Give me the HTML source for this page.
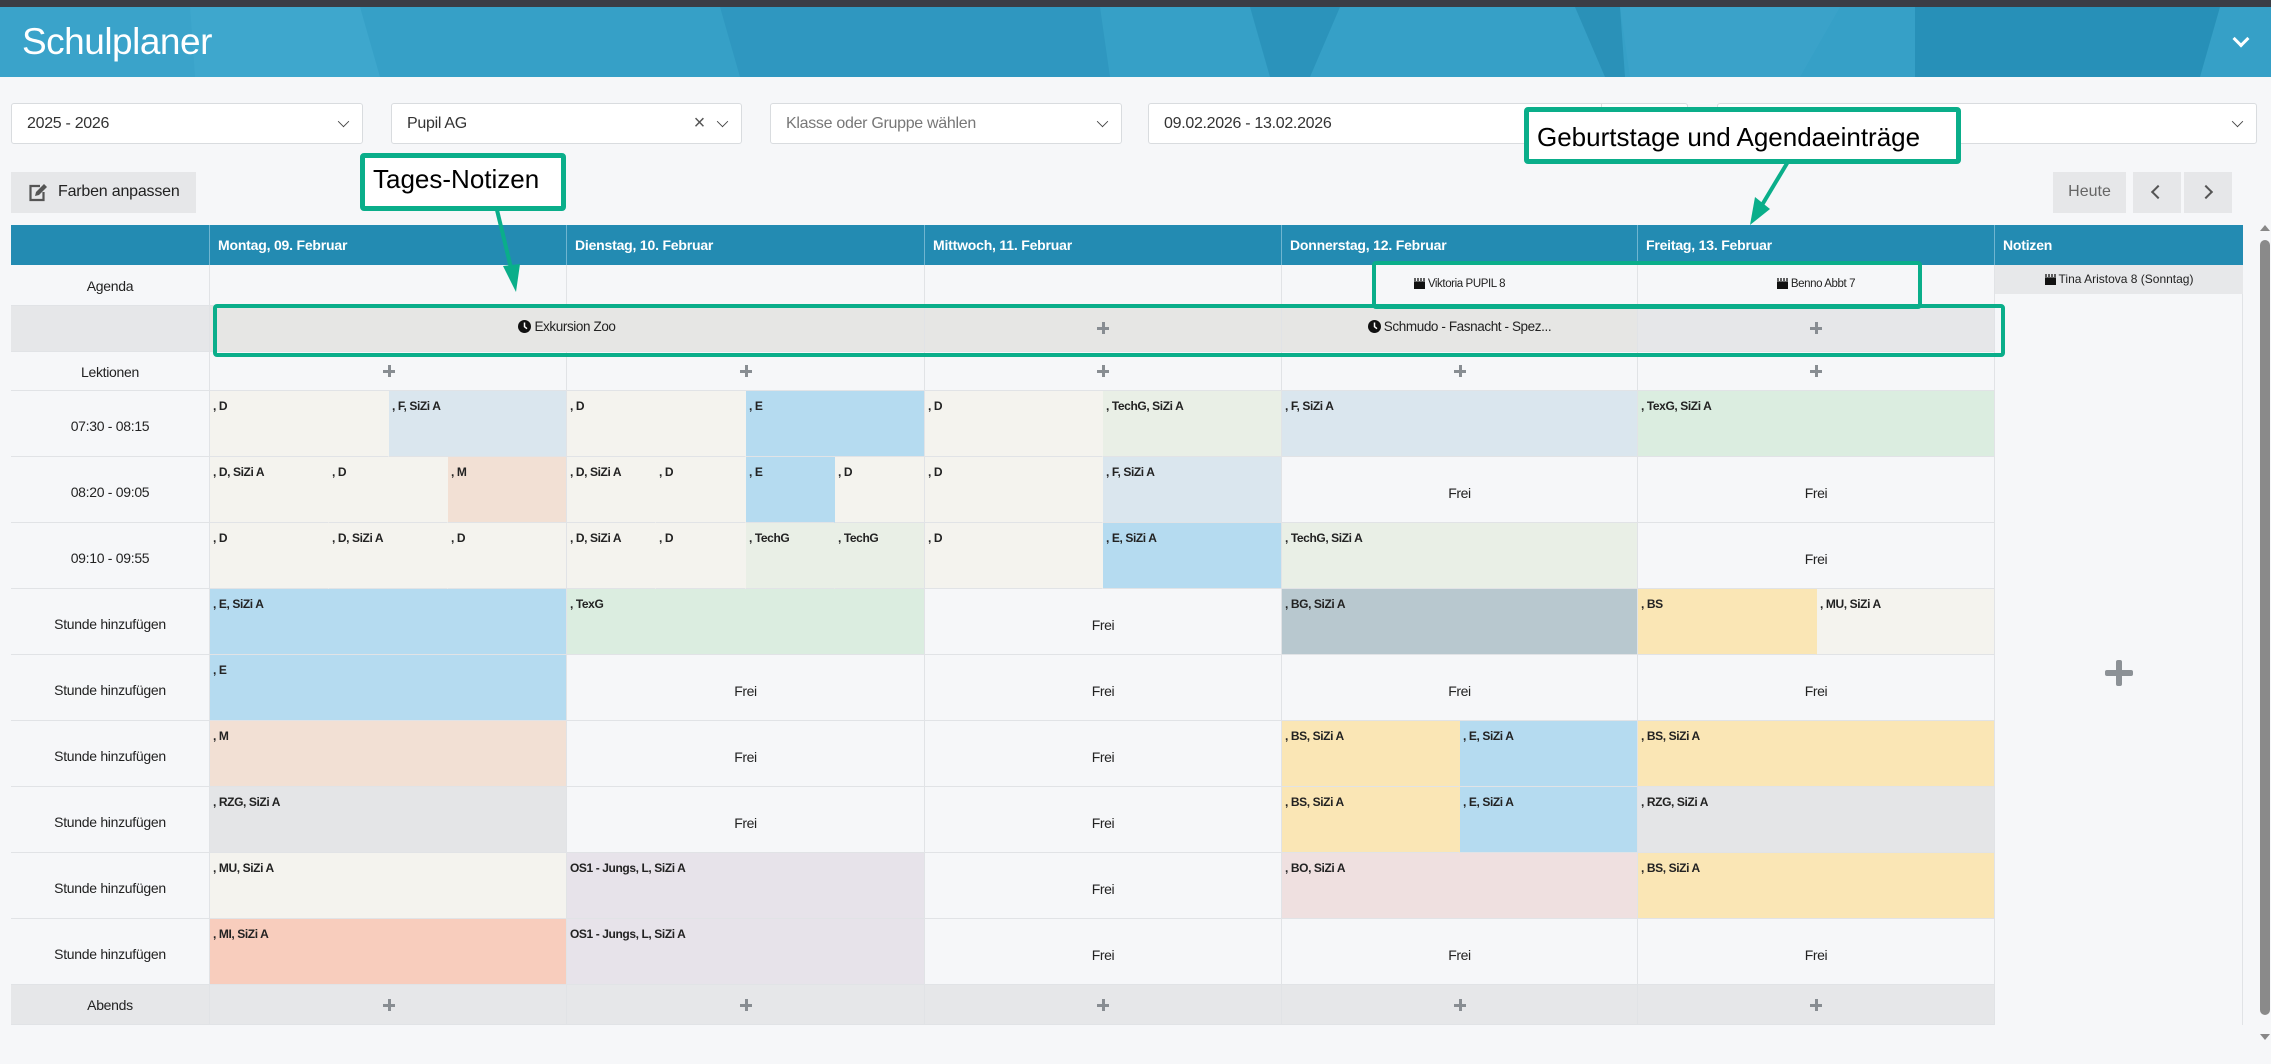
<!DOCTYPE html>
<html><head><meta charset="utf-8"><style>
*{margin:0;padding:0;box-sizing:border-box}
body{width:2271px;height:1064px;overflow:hidden;background:#f6f7f9;font-family:"Liberation Sans",sans-serif;position:relative;color:#222}
.a{position:absolute}
.hdr{left:0;top:7px;width:2271px;height:70px;background:#36a0c7;overflow:hidden}
.dd{position:absolute;top:103px;height:41px;background:#fff;border:1px solid #d9dcdf;border-radius:3px;font-size:16px;color:#333;padding:11px 15px;letter-spacing:-0.3px}
.chev{position:absolute;right:14px;top:13px;width:9px;height:9px;border-right:1.6px solid #444;border-bottom:1.6px solid #444;transform:rotate(45deg) scale(0.9,0.9)}
.c{position:absolute;border-right:1px solid #e1e3e6;border-bottom:1px solid #e1e3e6;background:#f6f7f9;font-size:12px;font-weight:bold;padding:8px 0 0 3px;letter-spacing:-0.4px;white-space:nowrap;overflow:hidden}
.in{border-right-color:transparent}
.fr{font-weight:normal;font-size:14px;text-align:center;padding:28px 0 0 0}
.lb{position:absolute;left:11px;width:199px;border-right:1px solid #e1e3e6;border-bottom:1px solid #e1e3e6;background:#f6f7f9;font-size:14px;text-align:center;letter-spacing:-0.3px}
.th{position:absolute;top:225px;height:40px;background:#238bb2;color:#fff;font-weight:bold;font-size:14px;padding:12px 8px;border-right:1px solid #6fb5d0;letter-spacing:-0.2px}
.pl{position:absolute;width:12px;height:12px}
.pl:before{content:"";position:absolute;left:5px;top:0;width:3px;height:12px;background:#888d92}
.pl:after{content:"";position:absolute;left:0;top:5px;width:12px;height:3px;background:#888d92}
.green{position:absolute;border:4px solid #0aae8a;border-radius:4px}
.call{position:absolute;background:#fff;border:5px solid #0aae8a;border-radius:4px;font-family:"Liberation Sans",sans-serif;color:#000;font-size:26px;padding:6px 8px;white-space:nowrap}
.bd{font-size:11.5px;font-weight:normal;color:#222}
.ic{display:inline-block;vertical-align:-2px;margin-right:3px}
</style></head><body>
<div class="a" style="left:0;top:0;width:2271px;height:7px;background:#3b3d45"></div>
<div class="a hdr">
<svg width="2271" height="70" style="position:absolute;left:0;top:0">
<polygon points="0,0 190,0 195,70 0,70" fill="#3aa3ca"/>
<polygon points="190,0 360,0 380,70 195,70" fill="#3ea7cd"/>
<polygon points="720,0 1100,0 1110,70 740,70" fill="#2f97c0"/>
<polygon points="1250,0 1340,0 1310,70 1270,70" fill="#2b93bb"/>
<polygon points="1575,0 1620,0 1625,70 1605,70" fill="#2a91b8"/>
<polygon points="1620,0 1840,0 1800,70 1630,70" fill="#3aa2c9"/>
<polygon points="1915,0 2220,0 2200,70 1915,70" fill="#2790b8"/>
</svg>
<div class="a" style="left:22px;top:14px;color:#fff;font-size:37px;letter-spacing:-0.5px">Schulplaner</div>
<div class="a" style="left:2235px;top:26px;width:12px;height:12px;border-right:3px solid #fff;border-bottom:3px solid #fff;transform:rotate(45deg)"></div>
</div>

<div class="dd" style="left:11px;width:352px">2025 - 2026<div class="chev"></div></div>
<div class="dd" style="left:391px;width:351px">Pupil AG<span style="position:absolute;right:36px;top:8px;font-size:20px;color:#555">×</span><div class="chev"></div></div>
<div class="dd" style="left:770px;width:352px;color:#777">Klasse oder Gruppe wählen<div class="chev"></div></div>
<div class="dd" style="left:1148px;width:540px">09.02.2026 - 13.02.2026<div class="a" style="left:452px;top:0;width:1px;height:39px;background:#ddd"></div></div>
<div class="dd" style="left:1717px;width:540px"><div class="chev"></div></div>

<div class="a" style="left:11px;top:172px;width:185px;height:41px;background:#e6e7e9;font-size:16px;padding:11px 0 0 47px;letter-spacing:-0.2px">Farben anpassen
<svg class="a" style="left:17px;top:11px" width="20" height="19" viewBox="0 0 20 19"><path d="M12 3H2.5v14h13V9" fill="none" stroke="#555" stroke-width="2.2"/><path d="M7 13l1-4 8-8 3 3-8 8z" fill="#555"/></svg></div>
<div class="a" style="left:2053px;top:172px;width:73px;height:41px;background:#e6e7e9;font-size:16px;color:#666;text-align:center;padding-top:11px">Heute</div>
<div class="a" style="left:2133px;top:172px;width:48px;height:41px;background:#e6e7e9"><div class="a" style="left:20px;top:15px;width:10px;height:10px;border-left:2.5px solid #555;border-bottom:2.5px solid #555;transform:rotate(45deg)"></div></div>
<div class="a" style="left:2184px;top:172px;width:48px;height:41px;background:#e6e7e9"><div class="a" style="left:17px;top:15px;width:10px;height:10px;border-right:2.5px solid #555;border-top:2.5px solid #555;transform:rotate(45deg)"></div></div>

<div class="th" style="left:11px;width:199px"></div>
<div class="th" style="left:210px;width:357px">Montag, 09. Februar</div>
<div class="th" style="left:567px;width:358px">Dienstag, 10. Februar</div>
<div class="th" style="left:925px;width:357px">Mittwoch, 11. Februar</div>
<div class="th" style="left:1282px;width:356px">Donnerstag, 12. Februar</div>
<div class="th" style="left:1638px;width:357px">Freitag, 13. Februar</div>
<div class="th" style="left:1995px;width:248px;border-right:none">Notizen</div>

<div class="a" style="left:1995px;top:265px;width:248px;height:760px;background:#f6f7f9;border-right:1px solid #e1e3e6"></div>
<div class="a" style="left:1995px;top:265px;width:248px;height:29px;background:#e7e8ea;font-size:12px;text-align:center;padding-top:7px"><svg class="ic" width="11" height="12" viewBox="0 0 11 12"><path d="M1 1v3M4 1v3M7 1v3M10 1v3M0 5h11v7H0z" stroke="#111" stroke-width="1.3" fill="#111"/></svg>Tina Aristova 8 (Sonntag)</div>
<div class="a" style="left:2105px;top:660px;width:28px;height:26px"><div class="a" style="left:11px;top:0;width:6px;height:26px;background:#8c9196;border-radius:2px"></div><div class="a" style="left:0;top:10px;width:28px;height:6px;background:#8c9196;border-radius:2px"></div></div>

<div class="lb" style="top:265px;height:41px;padding-top:13px">Agenda</div>
<div class="c" style="left:210px;top:265px;width:357px;height:41px"></div>
<div class="c" style="left:567px;top:265px;width:358px;height:41px"></div>
<div class="c" style="left:925px;top:265px;width:357px;height:41px"></div>
<div class="c bd" style="left:1282px;top:265px;width:356px;height:41px;text-align:center;padding:12px 0 0"><svg class="ic" width="11" height="12" viewBox="0 0 11 12"><path d="M1 1v3M4 1v3M7 1v3M10 1v3M0 5h11v7H0z" stroke="#111" stroke-width="1.3" fill="#111"/></svg>Viktoria PUPIL 8</div>
<div class="c bd" style="left:1638px;top:265px;width:357px;height:41px;text-align:center;padding:12px 0 0"><svg class="ic" width="11" height="12" viewBox="0 0 11 12"><path d="M1 1v3M4 1v3M7 1v3M10 1v3M0 5h11v7H0z" stroke="#111" stroke-width="1.3" fill="#111"/></svg>Benno Abbt 7</div>

<div class="lb" style="top:306px;height:46px;background:#e6e7e9"></div>
<div class="c" style="left:210px;top:306px;width:715px;height:46px;background:#e6e6e4;font-weight:normal;font-size:13.5px;text-align:center;padding:13px 0 0"><svg class="ic" width="13" height="13" viewBox="0 0 13 13"><circle cx="6.5" cy="6.5" r="6.5" fill="#111"/><path d="M6.5 2.5v4.2l2.5 2" stroke="#fff" stroke-width="1.5" fill="none"/></svg>Exkursion Zoo</div>
<div class="c" style="left:925px;top:306px;width:357px;height:46px;background:#e6e6e4"></div>
<div class="c" style="left:1282px;top:306px;width:356px;height:46px;background:#e6e6e4;font-weight:normal;font-size:13.5px;text-align:center;padding:13px 0 0"><svg class="ic" width="13" height="13" viewBox="0 0 13 13"><circle cx="6.5" cy="6.5" r="6.5" fill="#111"/><path d="M6.5 2.5v4.2l2.5 2" stroke="#fff" stroke-width="1.5" fill="none"/></svg>Schmudo - Fasnacht - Spez...</div>
<div class="c" style="left:1638px;top:306px;width:357px;height:46px;background:#e6e7e9"></div>
<div class="pl" style="left:1097px;top:322px"></div>
<div class="pl" style="left:1810px;top:322px"></div>

<div class="lb" style="top:352px;height:39px;padding-top:12px">Lektionen</div>
<div class="c" style="left:210px;top:352px;width:357px;height:39px"></div>
<div class="c" style="left:567px;top:352px;width:358px;height:39px"></div>
<div class="c" style="left:925px;top:352px;width:357px;height:39px"></div>
<div class="c" style="left:1282px;top:352px;width:356px;height:39px"></div>
<div class="c" style="left:1638px;top:352px;width:357px;height:39px"></div>
<div class="pl" style="left:383px;top:365px"></div>
<div class="pl" style="left:740px;top:365px"></div>
<div class="pl" style="left:1097px;top:365px"></div>
<div class="pl" style="left:1454px;top:365px"></div>
<div class="pl" style="left:1810px;top:365px"></div>

<div class="lb" style="top:391px;height:66px;padding-top:27px">07:30 - 08:15</div>
<div class="lb" style="top:457px;height:66px;padding-top:27px">08:20 - 09:05</div>
<div class="lb" style="top:523px;height:66px;padding-top:27px">09:10 - 09:55</div>
<div class="lb" style="top:589px;height:66px;padding-top:27px">Stunde hinzufügen</div>
<div class="lb" style="top:655px;height:66px;padding-top:27px">Stunde hinzufügen</div>
<div class="lb" style="top:721px;height:66px;padding-top:27px">Stunde hinzufügen</div>
<div class="lb" style="top:787px;height:66px;padding-top:27px">Stunde hinzufügen</div>
<div class="lb" style="top:853px;height:66px;padding-top:27px">Stunde hinzufügen</div>
<div class="lb" style="top:919px;height:66px;padding-top:27px">Stunde hinzufügen</div>

<div class="c in" style="left:210px;top:391px;width:179px;height:66px;background:#f4f3ee">, D</div>
<div class="c" style="left:389px;top:391px;width:178px;height:66px;background:#dae6ee">, F, SiZi A</div>
<div class="c in" style="left:567px;top:391px;width:179px;height:66px;background:#f4f3ee">, D</div>
<div class="c" style="left:746px;top:391px;width:179px;height:66px;background:#b5dbf0">, E</div>
<div class="c in" style="left:925px;top:391px;width:178px;height:66px;background:#f4f3ee">, D</div>
<div class="c" style="left:1103px;top:391px;width:179px;height:66px;background:#e9efe6">, TechG, SiZi A</div>
<div class="c" style="left:1282px;top:391px;width:356px;height:66px;background:#dae6ee">, F, SiZi A</div>
<div class="c" style="left:1638px;top:391px;width:357px;height:66px;background:#dbede0">, TexG, SiZi A</div>

<div class="c in" style="left:210px;top:457px;width:119px;height:66px;background:#f4f3ee">, D, SiZi A</div>
<div class="c in" style="left:329px;top:457px;width:119px;height:66px;background:#f4f3ee">, D</div>
<div class="c" style="left:448px;top:457px;width:119px;height:66px;background:#f2e0d4">, M</div>
<div class="c in" style="left:567px;top:457px;width:89px;height:66px;background:#f4f3ee">, D, SiZi A</div>
<div class="c in" style="left:656px;top:457px;width:90px;height:66px;background:#f4f3ee">, D</div>
<div class="c in" style="left:746px;top:457px;width:89px;height:66px;background:#b5dbf0">, E</div>
<div class="c" style="left:835px;top:457px;width:90px;height:66px;background:#f4f3ee">, D</div>
<div class="c in" style="left:925px;top:457px;width:178px;height:66px;background:#f4f3ee">, D</div>
<div class="c" style="left:1103px;top:457px;width:179px;height:66px;background:#dae6ee">, F, SiZi A</div>
<div class="c fr" style="left:1282px;top:457px;width:356px;height:66px">Frei</div>
<div class="c fr" style="left:1638px;top:457px;width:357px;height:66px">Frei</div>

<div class="c in" style="left:210px;top:523px;width:119px;height:66px;background:#f4f3ee">, D</div>
<div class="c in" style="left:329px;top:523px;width:119px;height:66px;background:#f4f3ee">, D, SiZi A</div>
<div class="c" style="left:448px;top:523px;width:119px;height:66px;background:#f4f3ee">, D</div>
<div class="c in" style="left:567px;top:523px;width:89px;height:66px;background:#f4f3ee">, D, SiZi A</div>
<div class="c in" style="left:656px;top:523px;width:90px;height:66px;background:#f4f3ee">, D</div>
<div class="c in" style="left:746px;top:523px;width:89px;height:66px;background:#e9efe6">, TechG</div>
<div class="c" style="left:835px;top:523px;width:90px;height:66px;background:#e9efe6">, TechG</div>
<div class="c in" style="left:925px;top:523px;width:178px;height:66px;background:#f4f3ee">, D</div>
<div class="c" style="left:1103px;top:523px;width:179px;height:66px;background:#b5dbf0">, E, SiZi A</div>
<div class="c" style="left:1282px;top:523px;width:356px;height:66px;background:#e9efe6">, TechG, SiZi A</div>
<div class="c fr" style="left:1638px;top:523px;width:357px;height:66px">Frei</div>

<div class="c" style="left:210px;top:589px;width:357px;height:66px;background:#b5dbf0">, E, SiZi A</div>
<div class="c" style="left:567px;top:589px;width:358px;height:66px;background:#dbede0">, TexG</div>
<div class="c fr" style="left:925px;top:589px;width:357px;height:66px">Frei</div>
<div class="c" style="left:1282px;top:589px;width:356px;height:66px;background:#b8c8cf">, BG, SiZi A</div>
<div class="c in" style="left:1638px;top:589px;width:179px;height:66px;background:#fae6b5">, BS</div>
<div class="c" style="left:1817px;top:589px;width:178px;height:66px;background:#f4f3ee">, MU, SiZi A</div>

<div class="c" style="left:210px;top:655px;width:357px;height:66px;background:#b5dbf0">, E</div>
<div class="c fr" style="left:567px;top:655px;width:358px;height:66px">Frei</div>
<div class="c fr" style="left:925px;top:655px;width:357px;height:66px">Frei</div>
<div class="c fr" style="left:1282px;top:655px;width:356px;height:66px">Frei</div>
<div class="c fr" style="left:1638px;top:655px;width:357px;height:66px">Frei</div>

<div class="c" style="left:210px;top:721px;width:357px;height:66px;background:#f2e0d4">, M</div>
<div class="c fr" style="left:567px;top:721px;width:358px;height:66px">Frei</div>
<div class="c fr" style="left:925px;top:721px;width:357px;height:66px">Frei</div>
<div class="c in" style="left:1282px;top:721px;width:178px;height:66px;background:#fae6b5">, BS, SiZi A</div>
<div class="c" style="left:1460px;top:721px;width:178px;height:66px;background:#b5dbf0">, E, SiZi A</div>
<div class="c" style="left:1638px;top:721px;width:357px;height:66px;background:#fae6b5">, BS, SiZi A</div>

<div class="c" style="left:210px;top:787px;width:357px;height:66px;background:#e4e5e7">, RZG, SiZi A</div>
<div class="c fr" style="left:567px;top:787px;width:358px;height:66px">Frei</div>
<div class="c fr" style="left:925px;top:787px;width:357px;height:66px">Frei</div>
<div class="c in" style="left:1282px;top:787px;width:178px;height:66px;background:#fae6b5">, BS, SiZi A</div>
<div class="c" style="left:1460px;top:787px;width:178px;height:66px;background:#b5dbf0">, E, SiZi A</div>
<div class="c" style="left:1638px;top:787px;width:357px;height:66px;background:#e4e5e7">, RZG, SiZi A</div>

<div class="c" style="left:210px;top:853px;width:357px;height:66px;background:#f4f3ee">, MU, SiZi A</div>
<div class="c" style="left:567px;top:853px;width:358px;height:66px;background:#e7e3ea">OS1 - Jungs, L, SiZi A</div>
<div class="c fr" style="left:925px;top:853px;width:357px;height:66px">Frei</div>
<div class="c" style="left:1282px;top:853px;width:356px;height:66px;background:#efe0e0">, BO, SiZi A</div>
<div class="c" style="left:1638px;top:853px;width:357px;height:66px;background:#fae6b5">, BS, SiZi A</div>

<div class="c" style="left:210px;top:919px;width:357px;height:66px;background:#f8cdbd">, MI, SiZi A</div>
<div class="c" style="left:567px;top:919px;width:358px;height:66px;background:#e7e3ea">OS1 - Jungs, L, SiZi A</div>
<div class="c fr" style="left:925px;top:919px;width:357px;height:66px">Frei</div>
<div class="c fr" style="left:1282px;top:919px;width:356px;height:66px">Frei</div>
<div class="c fr" style="left:1638px;top:919px;width:357px;height:66px">Frei</div>

<div class="lb" style="top:985px;height:40px;padding-top:12px;background:#e6e7e9">Abends</div>
<div class="c" style="left:210px;top:985px;width:357px;height:40px;background:#e6e7e9"></div>
<div class="c" style="left:567px;top:985px;width:358px;height:40px;background:#e6e7e9"></div>
<div class="c" style="left:925px;top:985px;width:357px;height:40px;background:#e6e7e9"></div>
<div class="c" style="left:1282px;top:985px;width:356px;height:40px;background:#e6e7e9"></div>
<div class="c" style="left:1638px;top:985px;width:357px;height:40px;background:#e6e7e9"></div>
<div class="pl" style="left:383px;top:999px"></div>
<div class="pl" style="left:740px;top:999px"></div>
<div class="pl" style="left:1097px;top:999px"></div>
<div class="pl" style="left:1454px;top:999px"></div>
<div class="pl" style="left:1810px;top:999px"></div>

<div class="a" style="left:2260px;top:225px;width:0;height:0;border-left:5px solid transparent;border-right:5px solid transparent;border-bottom:6px solid #888"></div>
<div class="a" style="left:2260px;top:240px;width:10px;height:775px;background:#8a8a8a;border-radius:5px"></div>
<div class="a" style="left:2260px;top:1034px;width:0;height:0;border-left:5px solid transparent;border-right:5px solid transparent;border-top:6px solid #888"></div>

<div class="green" style="left:213px;top:304px;width:1792px;height:53px"></div>
<div class="green" style="left:1372px;top:261px;width:550px;height:48px"></div>
<svg class="a" style="left:0;top:0" width="2271" height="1064">
<line x1="497" y1="210" x2="512" y2="272" stroke="#0aae8a" stroke-width="4"/>
<polygon points="503,266 520,264 516,292" fill="#0aae8a"/>
<line x1="1789" y1="160" x2="1762" y2="205" stroke="#0aae8a" stroke-width="4"/>
<polygon points="1755,197 1770,209 1750,225" fill="#0aae8a"/>
</svg>
<div class="call" style="left:360px;top:153px;width:206px;height:58px">Tages-Notizen</div>
<div class="call" style="left:1524px;top:107px;width:437px;height:57px;padding-top:10px">Geburtstage und Agendaeinträge</div>
</body></html>
